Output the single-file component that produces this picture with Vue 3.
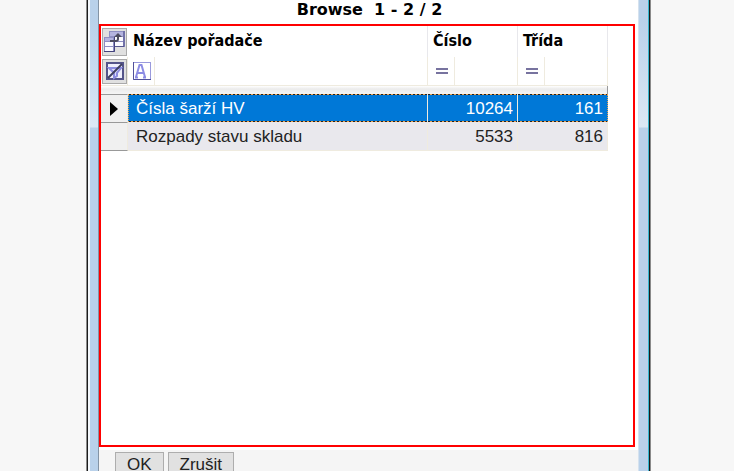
<script setup>
import { ref } from 'vue'

const columns = [
  { key: 'name', label: 'Název pořadače', type: 'text' },
  { key: 'number', label: 'Číslo', type: 'number' },
  { key: 'cls', label: 'Třída', type: 'number' }
]
const rows = [
  { name: 'Čísla šarží HV', number: 10264, cls: 161 },
  { name: 'Rozpady stavu skladu', number: 5533, cls: 816 }
]
const filters = ref({ name: '', number: '', cls: '' })
const selected = ref(0)
</script>

<template>
  <div class="desktop">
    <main class="window">
      <div class="edge left"></div>
      <section class="content">
        <h1 class="title">Browse&nbsp; 1 - 2 / 2</h1>
        <div class="panel">
          <table class="grid">
            <colgroup>
              <col class="c-tool" />
              <col />
              <col class="c-num" />
              <col class="c-num" />
            </colgroup>
            <thead>
              <tr class="head">
                <td class="tool">
                  <button class="tool-btn tall" type="button" aria-label="Sloupce">
                    <svg width="21" height="22" viewBox="0 0 21 22">
                      <rect x="5" y="0" width="16" height="16" fill="#8f8fc4" />
                      <rect x="6" y="1" width="13" height="4" fill="#b4b4e0" />
                      <rect x="6" y="6" width="13" height="4" fill="#fafaff" />
                      <rect x="6" y="11" width="13" height="4" fill="#fafaff" />
                      <path d="M20 0v15.500H10" fill="none" stroke="#55558e" />
                      <rect x="0" y="6" width="11" height="15" fill="#8f8fc4" />
                      <rect x="1" y="7" width="8" height="3" fill="#b4b4e0" />
                      <rect x="1" y="11" width="8" height="4" fill="#fafaff" />
                      <rect x="1" y="16" width="8" height="4" fill="#fafaff" />
                      <path d="M10.500 6v14.500H0" fill="none" stroke="#44447c" />
                      <path d="M6 10h6q2 0 2-2V5" fill="none" stroke="#4c4c60" stroke-width="2" />
                      <path d="M10 6l4-4 4 4z" fill="#4c4c60" />
                    </svg>
                  </button>
                </td>
                <th v-for="c in columns" :key="c.key" scope="col">{{ c.label }}</th>
              </tr>
              <tr class="filter">
                <td class="tool">
                  <button class="tool-btn" type="button" aria-label="Zrušit filtr">
                    <svg width="18" height="18" viewBox="0 0 18 18">
                      <rect x="1" y="1" width="16" height="16" fill="#f0f0fc" stroke="#55558a" stroke-width="2" />
                      <path d="M3 6h12l-4 5v3l-3 2v-5z" fill="#dcdcfa" stroke="#8c8ce0" stroke-width="2" />
                      <path d="M2 16L16 2" stroke="#3f3f60" stroke-width="2" />
                    </svg>
                  </button>
                </td>
                <td v-for="c in columns" :key="c.key">
                  <div class="filter-cell">
                    <span class="op">
                      <svg v-if="c.type === 'text'" width="18" height="18" viewBox="0 0 18 18">
                        <rect x="0.500" y="0.500" width="17" height="17" fill="#fff" stroke="#9a9adc" />
                        <path d="M0.500 0v17.500h17.500" fill="none" stroke="#51519a" />
                        <path d="M3 15L6.500 3h2L12 15M4.500 11h6M2 15.500h3M10 15.500h3" fill="none" stroke="#8c8ce4" stroke-width="2" />
                      </svg>
                      <svg v-else width="12" height="6" viewBox="0 0 12 6">
                        <path d="M0 1h12M0 5h12" stroke="#77739f" stroke-width="2" />
                      </svg>
                    </span>
                    <input v-model="filters[c.key]" type="text" :aria-label="c.label" />
                  </div>
                </td>
              </tr>
              <tr class="strip"><td colspan="4"></td></tr>
            </thead>
            <tbody>
              <tr v-for="(r, i) in rows" :key="r.name" :class="{ selected: i === selected }" @click="selected = i">
                <td class="marker">
                  <svg v-if="i === selected" width="8" height="14" viewBox="0 0 8 14">
                    <path d="M0 0v14l8-7z" fill="#000" />
                  </svg>
                </td>
                <td>{{ r.name }}</td>
                <td class="num">{{ r.number }}</td>
                <td class="num">{{ r.cls }}</td>
              </tr>
            </tbody>
          </table>
        </div>
        <footer class="actions">
          <button type="button">OK</button>
          <button type="button">Zrušit</button>
        </footer>
      </section>
      <div class="edge right"></div>
    </main>
  </div>
</template>

<style>
body {
  background: #f7f7f7;
}
</style>

<style scoped>
* {
  box-sizing: border-box;
}
.desktop {
  height: 100vh;
  padding: 0 83px 0 86px;
  overflow: hidden;
  font-family: "Liberation Sans", Arial, sans-serif;
}
.window {
  display: flex;
  height: 100%;
  border-left: 1px solid #8a8a8a;
  border-right: 1px solid #8a8a8a;
}
.edge {
  flex: none;
  background: linear-gradient(#b9d1ea 0, #b9d1ea 20px, #dce8f5 127px, #b9d1ea 128px);
}
.left {
  width: 12px;
  border-left: 1px solid #1c1c1c;
  border-right: 1px solid #8494a5;
  box-shadow: inset 2px 0 #f4f8fc;
}
.right {
  width: 12px;
  border-right: 1px solid #1c1c1c;
  box-shadow: inset -1px 0 #35b8d0, inset 1px 0 #d5e2ef;
}
.content {
  flex: 1;
  min-width: 0;
  display: flex;
  flex-direction: column;
  background: #fff;
}
.title {
  flex: none;
  height: 24px;
  margin: 0;
  padding-left: 2px;
  font: bold 16px/20px "DejaVu Sans", sans-serif;
  text-align: center;
}
.panel {
  flex: 1;
  min-height: 0;
  margin-right: 3px;
  border: 2px solid #f00;
}
.grid {
  width: calc(100% - 25px);
  table-layout: fixed;
  border-collapse: separate;
  border-spacing: 0;
}
.c-tool {
  width: 27px;
}
.c-num {
  width: 90px;
}
td,
th {
  padding: 0;
  border-right: 1px solid #efebdf;
}
.head {
  height: 31px;
}
.head th {
  padding: 0 0 2px 5px;
  border-color: #e8e8ec;
  font: bold 16px/20px "DejaVu Sans Condensed", "DejaVu Sans", sans-serif;
  text-align: left;
  white-space: nowrap;
}
.head .tool {
  border-color: transparent;
}
.tool {
  padding-left: 1px;
}
.tool-btn {
  display: flex;
  align-items: center;
  justify-content: center;
  width: 25px;
  height: 25px;
  padding: 0;
  background: #e0e0e0;
  border: 1px solid #aaa;
}
.tall {
  height: 28px;
}
.filter {
  height: 29px;
}
.filter td {
  border-bottom: 1px solid #efebdf;
}
.filter-cell {
  display: flex;
  height: 28px;
}
.op {
  display: flex;
  flex: none;
  align-items: center;
  justify-content: center;
  width: 27px;
  padding-left: 1px;
  border-right: 1px solid #efebdf;
}
.filter input {
  flex: 1;
  min-width: 0;
  padding: 0 4px;
  border: 0;
  outline: 0;
  background: transparent;
  font: 16px "Liberation Sans", sans-serif;
}
.strip td {
  height: 8px;
  background: linear-gradient(#fff, #ebebeb 3px, #f5f5f5);
  border-right: 1px solid #999;
}
tbody td {
  height: 29px;
  padding: 1px 4px 0 8px;
  background: #e9e8ed;
  border-bottom: 1px solid #efebdf;
  color: #222;
  font-size: 17px;
  line-height: 20px;
  white-space: nowrap;
}
tbody .marker {
  padding: 1px 0 0 9px;
  background: #f0f0f0;
  border-top: 1px solid #999;
  border-bottom: 0;
}
tbody tr:last-child .marker {
  border-bottom: 1px solid #999;
}
.marker svg {
  display: block;
}
.num {
  text-align: right;
}
.selected td {
  height: 28px;
}
.selected td:not(.marker) {
  color: #fff;
  border-bottom: 0;
  background:
    repeating-linear-gradient(90deg, #222 0 2px, #eba24f 2px 4px) top / 100% 1px no-repeat,
    repeating-linear-gradient(90deg, #222 0 2px, #eba24f 2px 4px) bottom / 100% 1px no-repeat,
    #0078d7;
}
.selected td:nth-child(2) {
  border-left: 1px dotted #eba24f;
  padding-left: 7px;
}
.selected td:last-child {
  border-right: 1px dotted #eba24f;
}
.actions {
  display: flex;
  flex: none;
  gap: 4px;
  height: 24px;
  padding: 5px 0 0 16px;
  background: linear-gradient(#fff 3px, #f5f5f5 3px);
}
.actions button {
  flex: none;
  height: 25px;
  padding: 0 11px;
  background: #e1e1e1;
  border: 1px solid #adadad;
  color: #222;
  font: 17px/20px "Liberation Sans", sans-serif;
}
</style>
